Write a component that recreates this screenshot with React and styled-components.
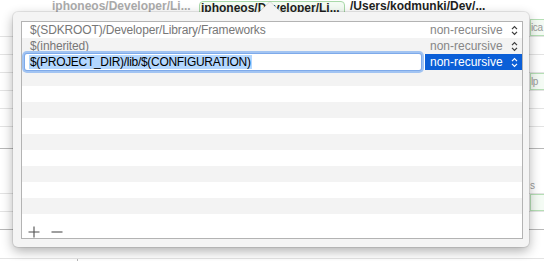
import styled, { createGlobalStyle } from "styled-components";

const GlobalStyle = createGlobalStyle`
  html, body {
    margin: 0;
    padding: 0;
    background: #ffffff;
    overflow: hidden;
  }
  body {
    font-family: "Liberation Sans", Arial, sans-serif;
    font-size: 12px;
  }
`;

const Page = styled.div`
  position: relative;
  width: 544px;
  height: 261px;
  overflow: hidden;
  background: #ffffff;
`;

/* window content behind the popover */
const Backdrop = styled.div`
  display: flex;
  flex-direction: column;
`;

const PathBar = styled.div`
  display: grid;
  grid-template-columns: 147px 151px auto;
  height: 19px;
  padding-left: 52px;
  overflow: hidden;
`;

const PathToken = styled.span`
  font-weight: bold;
  font-size: 12px;
  line-height: 12px;
  white-space: nowrap;
  color: ${(p) => (p.$muted ? "#ababab" : "#1f1f1f")};
`;

const PathTab = styled.div`
  width: 146px;
  height: 24px;
  margin-top: 1px;
  box-sizing: border-box;
  padding: 0 0 0 1px;
  border: 1px solid #a9d9a9;
  border-radius: 4px;
  background: #f3fbf3;
  line-height: 10px;
`;

const BgRow = styled.div`
  display: flex;
  justify-content: space-between;
  align-items: ${(p) => (p.$bottom ? "flex-end" : "center")};
  height: ${(p) => p.$h}px;
  flex-shrink: 0;
  box-sizing: border-box;
  border-bottom: 1px solid ${(p) => (p.$strong ? "#b8b8b8" : "#e3e3e3")};
`;

const BgDivider = styled.div`
  width: 77px;
  align-self: stretch;
  border-right: 1px solid #b8b8b8;
`;

const SideCell = styled.div`
  width: 14px;
  height: ${(p) => (p.$boxed ? "17px" : "auto")};
  margin-left: auto;
  box-sizing: border-box;
  padding-left: 0;
  white-space: nowrap;
  color: #9a9a9a;
  font-size: 10px;
  letter-spacing: -0.4px;
  line-height: 15px;
  border: ${(p) => (p.$boxed ? "1px solid #b5dfb5" : "none")};
  border-right: none;
  background: ${(p) => (p.$boxed ? "#f4fbf4" : "transparent")};
`;

/* popover */
const Popover = styled.div`
  position: absolute;
  left: 13px;
  top: 12px;
  width: 516px;
  height: 235px;
  box-sizing: border-box;
  padding: 9px 6px 8px 8px;
  display: flex;
  background: #f4f4f4;
  border-radius: 5px;
  box-shadow: 0 0 0 1px rgba(0, 0, 0, 0.08), 0 4px 12px rgba(0, 0, 0, 0.32);
`;

const Arrow = styled.svg`
  position: absolute;
  left: 245px;
  top: -11px;
`;

const Table = styled.div`
  flex: 1;
  display: flex;
  flex-direction: column;
  background: #ffffff;
  border: 1px solid #b3b3b3;
`;

const Row = styled.div`
  position: relative;
  display: flex;
  height: 16px;
  flex-shrink: 0;
  background: ${(p) => (p.$alt ? "#f3f3f3" : "#ffffff")};
`;

const PathCell = styled.div`
  width: 403px;
  flex-shrink: 0;
  box-sizing: border-box;
  padding-left: 8px;
  line-height: 16px;
  letter-spacing: -0.15px;
  color: #777777;
  white-space: nowrap;
  overflow: hidden;
`;

const EditCell = styled.div`
  width: 403px;
  flex-shrink: 0;
`;

const Field = styled.div`
  position: relative;
  z-index: 1;
  display: flex;
  align-items: center;
  width: 396px;
  height: 16px;
  margin-left: 3px;
  padding-left: 4px;
  box-sizing: border-box;
  background: #ffffff;
  border-radius: 2px;
  box-shadow: 0 0 0 1px #7eaaea, 0 0 0 3px #a2c4f2;
`;

const Selection = styled.span`
  background: #b3d7ff;
  color: #000000;
  line-height: 14px;
  padding: 0 1px;
  letter-spacing: -0.3px;
  white-space: nowrap;
`;

const ModeCell = styled.div`
  flex: 1;
  display: flex;
  align-items: center;
  justify-content: space-between;
  padding: 0 4px 0 5px;
  line-height: 16px;
  background: ${(p) => (p.$selected ? "#0b5fd7" : "transparent")};
  color: ${(p) => (p.$selected ? "#ffffff" : "#868686")};
`;

const Stepper = styled.svg`
  color: ${(p) => (p.$selected ? "#ffffff" : "#3a3a3a")};
`;

const Footer = styled.div`
  flex: 1;
  display: flex;
  align-items: flex-end;
  gap: 11px;
  padding: 0 0 0 6px;
`;

const IconButton = styled.svg`
  display: block;
  color: #4f4f4f;
`;

const rows = [
  { path: "$(SDKROOT)/Developer/Library/Frameworks", mode: "non-recursive" },
  { path: "$(inherited)", mode: "non-recursive" },
  { path: "$(PROJECT_DIR)/lib/$(CONFIGURATION)", mode: "non-recursive", editing: true },
];

const bgRows = [
  { h: 18, side: "ica", boxed: true },
  { h: 18 },
  { h: 18 },
  { h: 18, side: "lp", boxed: true },
  { h: 18 },
  { h: 18 },
  { h: 22, strong: true },
  { h: 45, side: "s", bottom: true },
  { h: 18, side: "", boxed: true },
  { h: 18, strong: true },
  { h: 29 },
];

function UpDown({ selected }) {
  return (
    <Stepper $selected={selected} width="7" height="11" viewBox="0 0 7 11">
      <path
        d="M1 4.2 L3.5 1.6 L6 4.2 M1 6.8 L3.5 9.4 L6 6.8"
        fill="none"
        stroke="currentColor"
        strokeWidth="1.2"
      />
    </Stepper>
  );
}

function PathRow({ index, path, mode, editing }) {
  const alt = index % 2 === 1;
  return (
    <Row $alt={alt}>
      {editing ? (
        <EditCell>
          <Field>
            <Selection>{path}</Selection>
          </Field>
        </EditCell>
      ) : (
        <PathCell>{path}</PathCell>
      )}
      <ModeCell $selected={editing}>
        {mode}
        <UpDown selected={editing} />
      </ModeCell>
    </Row>
  );
}

function App() {
  const empty = Array.from({ length: 12 - rows.length }, (_, i) => i + rows.length);
  return (
    <Page>
      <GlobalStyle />
      <Backdrop>
        <PathBar>
          <PathToken $muted>iphoneos/Developer/Li...</PathToken>
          <PathTab>
            <PathToken>iphoneos/Developer/Li...</PathToken>
          </PathTab>
          <PathToken>/Users/kodmunki/Dev/...</PathToken>
        </PathBar>
        {bgRows.map((r, i) => (
          <BgRow key={i} $h={r.h} $strong={r.strong} $bottom={r.bottom}>
            {r.side !== undefined && (
              <SideCell $boxed={r.boxed}>{r.side}</SideCell>
            )}
          </BgRow>
        ))}
        <BgRow $h={3}>
          <BgDivider />
        </BgRow>
      </Backdrop>

      <Popover>
        <Arrow width="24" height="12" viewBox="0 0 24 12">
          <path d="M0 12 L12 0.5 L24 12 Z" fill="#f4f4f4" />
          <path d="M0 12 L12 0.5 L24 12" fill="none" stroke="rgba(0,0,0,0.12)" />
        </Arrow>
        <Table>
          {rows.map((r, i) => (
            <PathRow key={i} index={i} {...r} />
          ))}
          {empty.map((i) => (
            <Row key={i} $alt={i % 2 === 1} />
          ))}
          <Footer>
            <IconButton width="12" height="12" viewBox="0 0 12 12">
              <path d="M0.5 6 H11.5 M6 0.5 V11.5" stroke="currentColor" strokeWidth="1.1" />
            </IconButton>
            <IconButton width="12" height="12" viewBox="0 0 12 12">
              <path d="M0.5 6 H11.5" stroke="currentColor" strokeWidth="1.1" />
            </IconButton>
          </Footer>
        </Table>
      </Popover>
    </Page>
  );
}

export default App;
